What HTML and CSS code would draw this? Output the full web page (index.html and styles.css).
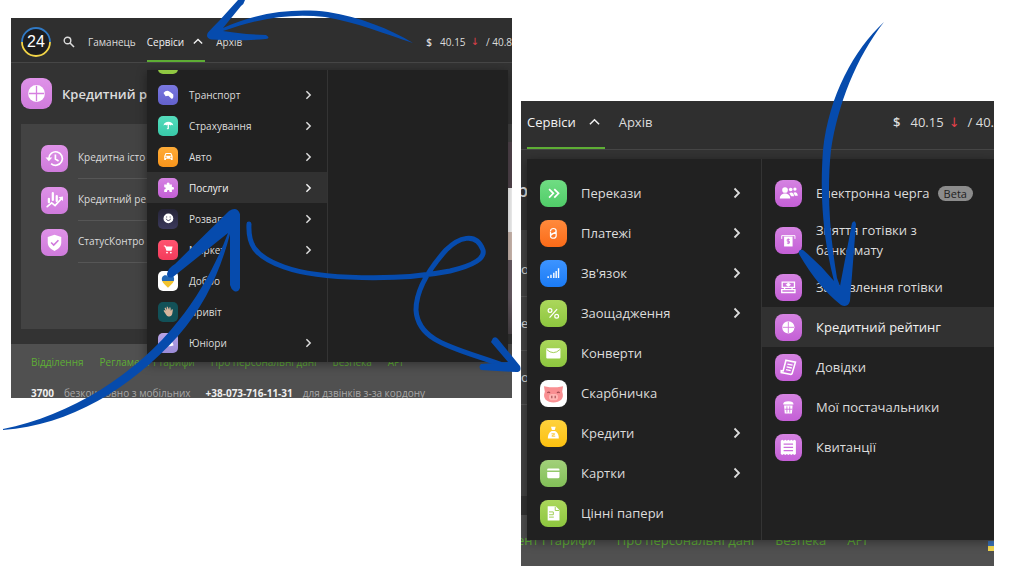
FILE: index.html
```
<!DOCTYPE html>
<html lang="uk">
<head>
<meta charset="utf-8">
<title>Кредитний рейтинг</title>
<link rel="stylesheet" href="styles.css">
</head>
<body>
<svg class="defs" aria-hidden="true">
  <symbol id="chev" viewBox="0 0 8 12"><path d="M1.5 1.5 6 6l-4.500 4.500" fill="none" stroke="currentColor" stroke-width="1.800"/></symbol>
  <symbol id="up" viewBox="0 0 12 8"><path d="M1 6.500 6 1.500l5 5" fill="none" stroke="currentColor" stroke-width="1.600"/></symbol>
  <symbol id="target" viewBox="0 0 24 24"><circle cx="12" cy="12" r="6.500"/><path d="M12 6v12M6 12h12" stroke="#d67fe0" stroke-width="1"/></symbol>
  <symbol id="history" viewBox="0 0 24 24"><path d="M7 12a6 6 0 1 1 2 4.500M12.800 8.500v4l2.800 1.700" fill="none" stroke="currentColor" stroke-width="1.500"/><path d="M4 11h6l-3 3.500z"/></symbol>
  <symbol id="bars" viewBox="0 0 24 24"><path d="M5.500 17.500l4-3.500 3 2.500 5.500-6" fill="none" stroke="currentColor" stroke-width="1.500" stroke-linecap="round"/><path d="M7 10.500v3M10.500 5.500v6M14 8v4.500" fill="none" stroke="currentColor" stroke-width="2" stroke-linecap="round"/><path d="M19.500 8.500v4l-4-3.500z"/></symbol>
  <symbol id="shield" viewBox="0 0 24 24"><path d="M12 5l6 2v5c0 4-3 6-6 7.500C9 18 6 16 6 12V7z"/><path d="M9 12l2.300 2.300L15.500 10" fill="none" stroke="#cf78dc" stroke-width="1.400"/></symbol>
  <symbol id="transport" viewBox="0 0 24 24"><path d="M5 10q3-4 7-3l3 2 4 3v4q-1 3-3 2l-4-4-4 .5z"/></symbol>
  <symbol id="umbrella" viewBox="0 0 24 24"><path d="M5 12c1-7 13-7 14 0-2-1-3-1-4 0-1-1-1.500-1-2.300-.7V16c0 2-3 2-3 0h1.200v-4.700C10 11 9.500 11 9 12c-1-1-2-1-4 0z"/></symbol>
  <symbol id="car" viewBox="0 0 24 24"><path d="M8 7h8l2 4.500V17h-2.500v-1.500h-7V17H6v-5.500z"/><path d="M9 8.500h6l1 2.500H8z" fill="#fb9d22"/><circle cx="8.500" cy="13.200" r="1" fill="#fb9d22"/><circle cx="15.500" cy="13.200" r="1" fill="#fb9d22"/></symbol>
  <symbol id="puzzle" viewBox="0 0 24 24"><path d="M6 8h4c-2-4 5-4 3.500 0H17v3.500c4-1.500 4 5 0 3.500V18.500h-3.500c.8-3.500-4-3.500-3.500 0H6V15c3 .5 3-3.500 0-3z"/></symbol>
  <symbol id="smile" viewBox="0 0 24 24"><circle cx="12" cy="12" r="7"/><path d="M9 12.500c1 3.500 5 3.500 6 0M9.500 9.300v1.400M14.500 9.300v1.400" fill="none" stroke="#333149" stroke-width="1.300"/></symbol>
  <symbol id="cart" viewBox="0 0 24 24"><path d="M5.500 6.500H8l.7 1.500H18l-1.500 6H9.200L7 8H5.500z"/><circle cx="10" cy="16.500" r="1.300"/><circle cx="15.500" cy="16.500" r="1.300"/></symbol>
  <symbol id="heart" viewBox="0 0 24 24"><path d="M5 12C3 6 9 3 12 7c3-4 9-1 7 5z" fill="#2468b5"/><path d="M5 12h14c-1 3-4 5-7 8-3-3-6-5-7-8z" fill="#f2c32f"/></symbol>
  <symbol id="hand" viewBox="0 0 24 24"><path d="M9 17 5 11l1.300-1L8 11.500 6.500 7l1.400-.5L10 10 9.500 5.500l1.500-.3 2 4.500.5-3.500 1.500.2.500 5 1.500-2.500 1.500.5-1 6c-1 5-6 5-8.500 1.600z" fill="#d8b49c"/></symbol>
  <symbol id="cap" viewBox="0 0 24 24"><path d="M6 14c0-9 11-10 12-1l1.500 3c-4 2-12 2-15 0z"/><path d="M10 14c0-3 1-5 3-6M14 14c1-2 0-4-1-6" fill="none" stroke="#a391d8" stroke-width=".8"/></symbol>
  <symbol id="transfer" viewBox="0 0 24 24"><path d="M7.500 7.500l4.500 4.500-4.500 4.500M13 7.500l4.500 4.500-4.500 4.500" fill="none" stroke="currentColor" stroke-width="1.800"/></symbol>
  <symbol id="hryvnia" viewBox="0 0 24 24"><path d="M9 9.500c0-3.500 6-3.500 6 0 0 2.500-6 3-6 5.500 0 3 6 3 6-.5M8.500 13.500l7-3M9 10v5M15 9.500v5" fill="none" stroke="currentColor" stroke-width="1.300"/></symbol>
  <symbol id="signal" viewBox="0 0 24 24"><path d="M6.500 17v-2M9.500 17v-3.500M12.500 17v-5.500M15 17V9.500M17.500 17V6.500" stroke="currentColor" stroke-width="1.500"/></symbol>
  <symbol id="percent" viewBox="0 0 24 24"><g fill="none" stroke="currentColor" stroke-width="1.300"><circle cx="8.500" cy="9" r="2"/><circle cx="15.500" cy="15" r="2"/><path d="M16 7.500l-8 9"/></g></symbol>
  <symbol id="mail" viewBox="0 0 24 24"><rect x="4.500" y="6.500" width="15" height="11" rx="1"/><path d="M5 8q7 6.500 14 0" fill="none" stroke="#9ccc4e" stroke-width="1"/></symbol>
  <symbol id="pig" viewBox="0 0 24 24"><path d="M3.500 5.500l5 1h7l5-1-.8 5c2.500 6-2 9.500-7.700 9.500S1.800 16.500 4.300 10.500z" fill="#f98f92"/><rect x="8" y="12.500" width="8" height="5.500" rx="2.500" fill="#ffb6b4"/><path d="M10.500 14v2.300M13.500 14v2.300M6.500 11.500q1.200-1.500 2.400 0M15.100 11.500q1.200-1.500 2.400 0" stroke="#a34d52" fill="none"/></symbol>
  <symbol id="bag" viewBox="0 0 24 24"><path d="M9.500 5h5l-1 3.500h-3z"/><path d="M10.200 9.500h3.600c3 1.500 4 4 4 8H6.200c0-4 1-6.500 4-8z"/><path d="M10 12.500h3.500c0 1.300-3 1-3 2.500H14" fill="none" stroke="#fbc52c"/></symbol>
  <symbol id="card" viewBox="0 0 24 24"><path d="M5.500 8q0-1.200 1.200-1.200h10.600q1.200 0 1.200 1.200v1h-13zM5.500 10.500h13V16q0 1.200-1.200 1.200H6.700q-1.200 0-1.200-1.200z"/></symbol>
  <symbol id="paper" viewBox="0 0 24 24"><path d="M6 4.500h8.500L18.500 8.500V19.500H6z"/><path d="M7.500 10.500h4.500v3H7.500M7.500 16h5M14 5v4h4" fill="none" stroke="#9ccc4e" stroke-width="1"/></symbol>
  <symbol id="people" viewBox="0 0 24 24"><circle cx="8.500" cy="8.500" r="3"/><path d="M3 17.500c0-7 11-7 11 0z"/><circle cx="14.500" cy="8" r="1.900"/><circle cx="19" cy="7.500" r="1.700"/><path d="M13 12c2-2 5-1 5 3h-3zM17.500 11.500c2-1.500 4.500 0 4.500 3h-3z"/></symbol>
  <symbol id="atm" viewBox="0 0 24 24"><path d="M5 10.500V7h14v3.500" fill="none" stroke="currentColor" stroke-width="1"/><rect x="7.500" y="8" width="9" height="10.500"/><path d="M13.500 11h-2.700v2h2.400v2h-2.700M12 10v6" fill="none" stroke="#cc6ddb" stroke-width=".9"/></symbol>
  <symbol id="cash" viewBox="0 0 24 24"><path d="M5.500 6.500h13v5.500h-13zM5 14.500h14v3H5zM8 12v2M16 12v2" fill="none" stroke="currentColor" stroke-width="1.400"/><path d="M12 7l2.800 2.300L12 11.500 9.200 9.300z"/></symbol>
  <symbol id="scroll" viewBox="0 0 24 24"><path d="M9.500 4.500l10 2-3.500 12q-.8 1.200-2.200.9L4.500 17.500v-2l2 .3z" fill="none" stroke="currentColor" stroke-width="1.700"/><path d="M11 8.500l5.500 1.200M10.200 11.500l5.500 1.200M9.500 14.500l5 1" stroke="currentColor" stroke-width="1.400"/></symbol>
  <symbol id="basket" viewBox="0 0 24 24"><path d="M6.500 9q0-3.500 5.500-3.500T17.500 9zM7.500 10h9l-.7 8.500H8.200z"/><path d="M10.500 11v6.500M13.500 11v6.500M8 14h8" stroke="#cc6ddb" stroke-width=".9"/></symbol>
  <symbol id="receipt" viewBox="0 0 24 24"><path d="M4 5l1.600-1 1.600 1 1.600-1 1.600 1L12 4l1.600 1 1.600-1 1.600 1 1.600-1L20 5v14l-1.600 1-1.600-1-1.600 1-1.600-1-1.600 1-1.600-1-1.600 1-1.600-1-1.600 1L4 19z"/><path d="M7 8.500h10M7 12h10M7 15.500h10" stroke="#cc6ddb" stroke-width="1.300"/></symbol>
</svg>

<main class="board">
  <section class="shot small">
    <header class="topbar">
      <svg class="logo" viewBox="0 0 30 30"><circle cx="15" cy="15" r="14" fill="#1d1d1f"/><path d="M1 15a14 14 0 0 1 28 0" fill="none" stroke="#3079c4" stroke-width="1.800"/><path d="M1 15a14 14 0 0 0 28 0" fill="none" stroke="#f3d548" stroke-width="1.800"/><text class="logo-text" x="15" y="20" text-anchor="middle">24</text></svg>
      <svg class="search" viewBox="0 0 12 12"><circle cx="4.500" cy="4.500" r="3.300" fill="none" stroke="currentColor" stroke-width="1.400"/><path d="M7 7l4 4" stroke="currentColor" stroke-width="1.600"/></svg>
      <nav class="tabs"><a href="#">Гаманець</a><a href="#" class="active">Сервіси<svg class="up"><use href="#up"/></svg></a><a href="#">Архів</a></nav>
      <div class="rate"><span class="usd">$</span><span>40.15</span><span class="fall">↓</span><span>/ 40.8</span></div>
    </header>
    <div class="title"><span class="tile pink"><svg><use href="#target"/></svg></span><h1>Кредитний р</h1></div>
    <div class="card">
      <a class="entry" href="#"><span class="tile pink"><svg><use href="#history"/></svg></span><span class="entry-name">Кредитна істо</span></a>
      <a class="entry" href="#"><span class="tile pink"><svg><use href="#bars"/></svg></span><span class="entry-name">Кредитний ре</span></a>
      <a class="entry" href="#"><span class="tile pink"><svg><use href="#shield"/></svg></span><span class="entry-name">СтатусКонтро</span></a>
    </div>
    <div class="picture"></div>
    <footer class="foot">
      <nav class="links"><a href="#">Відділення</a><a href="#">Регламент і тарифи</a><a href="#">Про персональні дані</a><a href="#">Безпека</a><a href="#">API</a></nav>
      <div class="phones"><b>3700</b><span>безкоштовно з мобільних</span><b>+38-073-716-11-31</b><span>для дзвінків з-за кордону</span></div>
    </footer>
    <div class="menu">
      <ul class="list main-list">
        <li><a href="#" aria-label="Цінні папери"><span class="tile lime"><svg><use href="#paper"/></svg></span></a></li>
        <li><a href="#"><span class="tile indigo"><svg><use href="#transport"/></svg></span>Транспорт<svg class="chev"><use href="#chev"/></svg></a></li>
        <li><a href="#"><span class="tile teal"><svg><use href="#umbrella"/></svg></span>Страхування<svg class="chev"><use href="#chev"/></svg></a></li>
        <li><a href="#"><span class="tile amber"><svg><use href="#car"/></svg></span>Авто<svg class="chev"><use href="#chev"/></svg></a></li>
        <li><a href="#" class="on"><span class="tile violet"><svg><use href="#puzzle"/></svg></span>Послуги<svg class="chev"><use href="#chev"/></svg></a></li>
        <li><a href="#"><span class="tile night"><svg><use href="#smile"/></svg></span>Розваги<svg class="chev"><use href="#chev"/></svg></a></li>
        <li><a href="#"><span class="tile red"><svg><use href="#cart"/></svg></span>Маркет<svg class="chev"><use href="#chev"/></svg></a></li>
        <li><a href="#"><span class="tile white"><svg><use href="#heart"/></svg></span>Добро</a></li>
        <li><a href="#"><span class="tile pine"><svg><use href="#hand"/></svg></span>Привіт</a></li>
        <li><a href="#"><span class="tile lilac"><svg><use href="#cap"/></svg></span>Юніори<svg class="chev"><use href="#chev"/></svg></a></li>
      </ul>
    </div>
  </section>

  <section class="shot large">
    <header class="topbar">
      <nav class="tabs"><a href="#" class="active">Сервіси<svg class="up"><use href="#up"/></svg></a><a href="#">Архів</a></nav>
      <div class="rate"><span class="usd">$</span><span>40.15</span><span class="fall">↓</span><span>/ 40.</span></div>
    </header>
    <div class="title"><h1>р</h1></div>
    <div class="card"><p class="cut">о</p><p class="cut">е</p><p class="cut">о.</p></div>
    <footer class="foot">
      <nav class="links"><a href="#">Регламент і тарифи</a><a href="#">Про персональні дані</a><a href="#">Безпека</a><a href="#">API</a></nav>
      <span class="flag"></span>
    </footer>
    <div class="menu">
      <ul class="list main-list">
        <li><a href="#"><span class="tile green"><svg><use href="#transfer"/></svg></span>Перекази<svg class="chev"><use href="#chev"/></svg></a></li>
        <li><a href="#"><span class="tile orange"><svg><use href="#hryvnia"/></svg></span>Платежі<svg class="chev"><use href="#chev"/></svg></a></li>
        <li><a href="#"><span class="tile blue"><svg><use href="#signal"/></svg></span>Зв'язок<svg class="chev"><use href="#chev"/></svg></a></li>
        <li><a href="#"><span class="tile lime"><svg><use href="#percent"/></svg></span>Заощадження<svg class="chev"><use href="#chev"/></svg></a></li>
        <li><a href="#"><span class="tile lime"><svg><use href="#mail"/></svg></span>Конверти</a></li>
        <li><a href="#"><span class="tile white"><svg><use href="#pig"/></svg></span>Скарбничка</a></li>
        <li><a href="#"><span class="tile yellow"><svg><use href="#bag"/></svg></span>Кредити<svg class="chev"><use href="#chev"/></svg></a></li>
        <li><a href="#"><span class="tile sage"><svg><use href="#card"/></svg></span>Картки<svg class="chev"><use href="#chev"/></svg></a></li>
        <li><a href="#"><span class="tile lime"><svg><use href="#paper"/></svg></span>Цінні папери</a></li>
      </ul>
      <ul class="list sub-list">
        <li><a href="#" class="tagged"><span class="tile violet"><svg><use href="#people"/></svg></span>Електронна черга<span class="beta">Beta</span></a></li>
        <li><a href="#" class="tall"><span class="tile violet"><svg><use href="#atm"/></svg></span>Зняття готівки з банкомату</a></li>
        <li><a href="#"><span class="tile violet"><svg><use href="#cash"/></svg></span>Замовлення готівки</a></li>
        <li><a href="#" class="on"><span class="tile violet"><svg><use href="#target"/></svg></span>Кредитний рейтинг</a></li>
        <li><a href="#"><span class="tile violet"><svg><use href="#scroll"/></svg></span>Довідки</a></li>
        <li><a href="#"><span class="tile violet"><svg><use href="#basket"/></svg></span>Мої постачальники</a></li>
        <li><a href="#"><span class="tile violet"><svg><use href="#receipt"/></svg></span>Квитанції</a></li>
      </ul>
    </div>
  </section>
</main>

<svg class="arrows" viewBox="0 0 1024 577" aria-hidden="true">
  <path d="M238 0h7q-1 4-4 6L223 28C258 12 295 8 328 12C360 17 390 29 413 43C385 34 356 22 325 17C291 13 260 18 223 31Q240 34 266 35q5 3 0 4Q240 41 211 39.500q-6-2-3-7Q212 28 219 21z"/>
  <path d="M3 429C70 416 137 374 179 320C200 294 217 262 228 233L173 277q-6 2-6-3q1-6 8-10L229 211q8-5 11 3L240 288q-2 5-6 3q-3-2-4-6L230 234C220 272 205 305 178 336C130 389 70 425 3 430z"/>
  <path d="M249 224C248 243 253 256 284 267C320 280 400 281 450 271C475 265 485 258 483 250C476 231 458 238 446 250C430 268 416 290 416 310C418 345 462 349 513 369" class="line"/>
  <path d="M493 338q3-2 5 1L520 366q2 6-4 6L481 370q-3-3 0-6L508 362L491 342z"/>
  <path d="M884 22C856 58 838 104 831 150C827 188 829 230 837 278L840 286L852 223q3-4 4 1L850 301q-2 7-9 4Q818 287 799 254q-1-5 4-4Q820 264 834 281C822 235 820 190 823 150C829 95 854 50 884 22z"/>
</svg>
</body>
</html>
```
FILE: styles.css
```
* { box-sizing: border-box; }
body { margin: 0; background: #fff; font-family: "Open Sans", "Noto Sans", sans-serif; color: #dcdcdc; }
a { color: inherit; text-decoration: none; }
ul { margin: 0; padding: 0; list-style: none; }
h1 { margin: 0; font-weight: 600; }
p { margin: 0; }
svg { flex: none; fill: currentColor; }
.defs { position: absolute; width: 0; height: 0; }

.board { display: grid; grid-template-columns: 501fr 473fr; gap: 9px; align-items: start; padding: 18px 30px 11px 11px; }
.shot { position: relative; overflow: hidden; background: #333; white-space: nowrap; }
.large { margin-top: 83px; }

.topbar { display: flex; align-items: center; border-bottom: 1px solid #464646; background: #2f2f2f; }
.tabs { display: flex; align-self: stretch; }
.tabs a { display: flex; align-items: center; }
.tabs .active { color: #f2f2f2; box-shadow: inset 0 -2px #5eae35; }
.rate { display: flex; align-items: center; margin-left: auto; }
.usd { font-weight: 600; }
.fall { color: #e0404a; font-family: "DejaVu Sans", sans-serif; }

.small .topbar { height: 45px; padding: 3px 0 0 10px; font-size: 10px; }
.logo { width: 30px; height: 30px; }
.logo-text { font: 16px "Liberation Sans", sans-serif; fill: #fff; }
.search { width: 12px; height: 12px; margin: 0 12px; }
.small .tabs { gap: 11px; margin-left: 1px; }
.small .up { width: 10px; height: 7px; margin: 0 2px 0 9px; }
.small .fall { margin: 0 7px 0 5px; }
.small .usd { margin-right: 8px; }

.title { display: flex; align-items: center; }
.small .title { gap: 10px; padding: 15px 10px; }
.small .title h1 { font-size: 13px; line-height: 20px; }

.tile { display: flex; flex: none; align-items: center; justify-content: center; color: #fff; }
.tile svg { width: 100%; height: 100%; }
.list .tile:not(.white) svg { width: 84%; height: 84%; }
.small .title .tile { width: 31px; height: 31px; border-radius: 9px; }
.pink { background: linear-gradient(#df92e8, #cf7bdc); }
.violet { background: linear-gradient(#d583e2, #c45fd6); }
.lime { background: linear-gradient(#abd75b, #8dc63f); }
.indigo { background: linear-gradient(#7a78e0, #6361cc); }
.teal { background: linear-gradient(#55dcbc, #38c9a9); }
.amber { background: linear-gradient(#ffac38, #f9951b); }
.night { background: linear-gradient(#252438, #3b395b); }
.red { background: linear-gradient(#ff5470, #f43b5b); }
.white { background: #fff; }
.pine { background: #125158; }
.lilac { background: linear-gradient(#b9a5e6, #9b8bd6); }
.green { background: linear-gradient(#70dd83, #50cc68); }
.orange { background: linear-gradient(#ff8a3c, #fb6b18); }
.blue { background: linear-gradient(#3d94ff, #1b7bf5); }
.yellow { background: linear-gradient(#ffd23c, #fcc010); }
.sage { background: linear-gradient(#a2d07a, #82bf58); }

.card { background: #434343; }
.small .card { height: 205px; margin: 0 0 15px 10px; padding: 13px 20px; }
.entry { display: flex; align-items: center; gap: 10px; font-size: 10px; }
.entry .tile { width: 27px; height: 27px; border-radius: 7px; }
.entry-name { flex: 1; padding: 13px 0; line-height: 15px; border-bottom: 1px solid #565656; }
.picture { position: absolute; top: 124px; right: 0; width: 4px; height: 192px; background: linear-gradient(#54474f 0 46px, #fff 46px 90px, #d5c0b6 90px 118px, #6d6068 118px 155px, #4c464a); }

.foot { position: relative; background: #505050; overflow: hidden; }
.links { display: flex; color: #5eae35; }
.small .foot { height: 54px; padding: 11px 20px; font-size: 10px; line-height: 15px; }
.small .links { gap: 16px; }
.phones { display: flex; gap: 10px; margin-top: 16px; color: #a8a8a8; }
.phones b { color: #eee; font-weight: 700; }
.phones span { margin-right: 5px; }

.menu { position: absolute; display: flex; overflow: hidden; background: #212121; box-shadow: 0 2px 10px rgba(0, 0, 0, .4); }
.list a { display: flex; align-items: center; }
.list .on { background: #313131; color: #f2f2f2; }
.chev { margin-left: auto; }
.main-list { border-right: 1px solid #343434; }

.small .menu { top: 52px; left: 136px; right: 4px; height: 292px; font-size: 10px; }
.small .main-list { display: flex; flex-direction: column; justify-content: flex-end; width: 181px; padding-bottom: 4px; }
.small .list a { height: 31px; padding: 0 15px 0 11px; gap: 11px; }
.small .list .tile { width: 20px; height: 20px; border-radius: 5px; }
.small .chev { width: 7px; height: 10px; }

.large .topbar { height: 49px; padding-left: 6px; font-size: 13px; }
.large .tabs a, .large .rate { padding-bottom: 6px; }
.large .tabs { gap: 14px; }
.large .up { width: 11px; height: 8px; margin: 0 5px 0 13px; }
.large .usd { margin-right: 10px; }
.large .fall { margin: 0 8px 0 5px; }
.large .title { height: 80px; }
.large .title h1 { font-size: 18px; margin-left: -4px; }
.large .card { height: 266px; margin-bottom: 19px; padding-top: 13px; font-size: 13px; line-height: 53px; }
.cut { border-bottom: 1px solid #565656; }
.large .foot { display: flex; height: 51px; font-size: 13px; line-height: 20px; padding-top: 15px; }
.large .links { gap: 21px; margin-left: -49px; }
.flag { width: 6px; height: 10px; margin: 11px 0 0 auto; background: linear-gradient(#3a70b5 50%, #f0d54e 50%); }
.large .menu { top: 58px; left: 6px; right: 0; height: 381px; padding-top: 14px; font-size: 13px; }
.large .menu::before { content: ""; position: absolute; top: 0; bottom: 0; left: 234px; border-left: 1px solid #343434; }
.large .main-list { flex: none; width: 235px; }
.sub-list { flex: 1; white-space: normal; }
.large .list a { height: 40px; padding: 0 20px 0 13px; gap: 14px; line-height: 20px; }
.large .list .tagged { white-space: nowrap; }
.large .list .tall { height: 54px; padding-right: 60px; }
.large .list .tile { width: 27px; height: 27px; border-radius: 8px; }
.large .chev { width: 8px; height: 12px; }
.beta { margin-left: -6px; padding: 0 6px; border-radius: 8px; background: #8c8c8c; color: #222; font-size: 11px; line-height: 15px; }

.arrows { position: absolute; top: 0; left: 0; width: 100%; fill: #064bad; pointer-events: none; }
.line { fill: none; stroke: #064bad; stroke-width: 5; stroke-linecap: round; }
```
